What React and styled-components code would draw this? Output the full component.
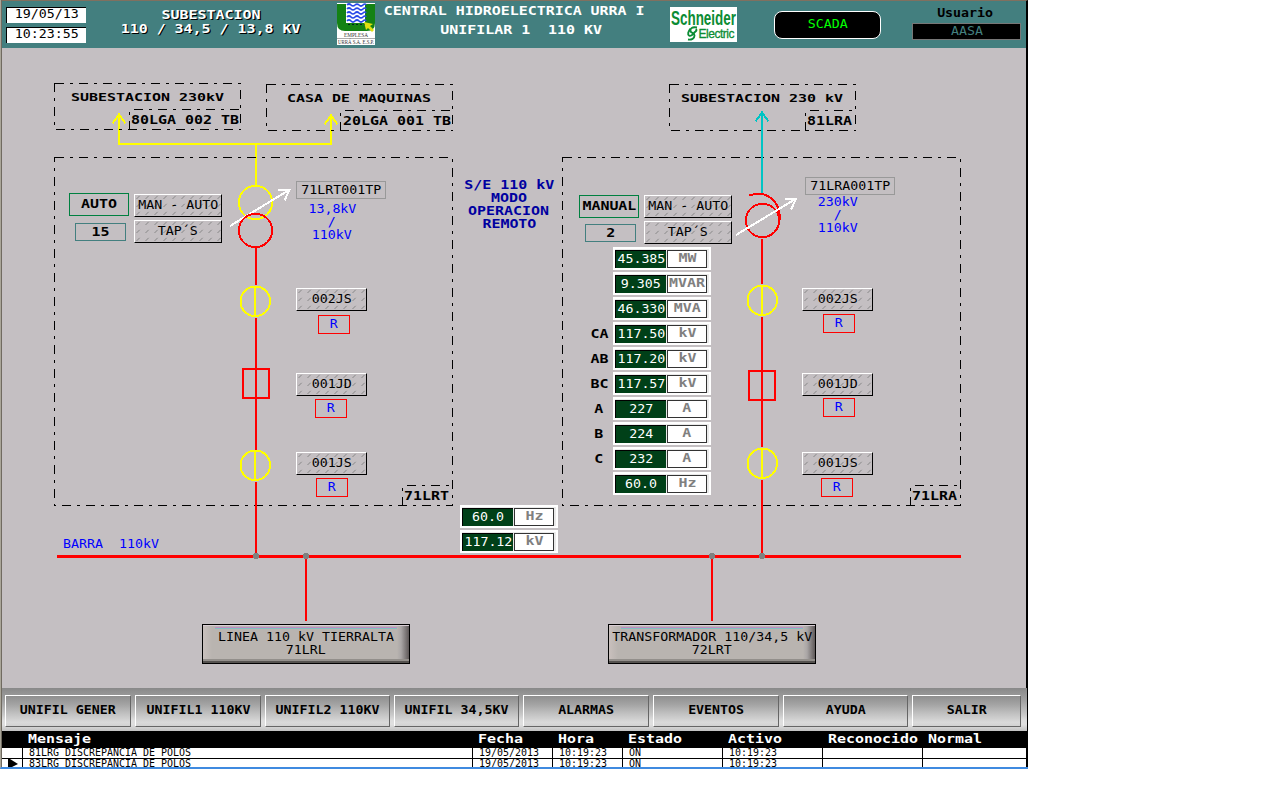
import React from "react";
import styled, { createGlobalStyle, css } from "styled-components";

const Global = createGlobalStyle`
  body { margin: 0; background: #fff; }
  * { box-sizing: border-box; }
`;

/* ---------- typography ---------- */

/* Terminal-style text: $size is the font size, $adv the width of one character cell. */
const Text = styled.span`
  display: block;
  flex: none;
  font-family: "DejaVu Sans Mono", "Liberation Mono", monospace;
  font-size: ${(p) => p.$size || 12.4}px;
  font-weight: ${(p) => (p.$bold ? 700 : 400)};
  color: ${(p) => p.$color || "#000"};
  line-height: ${(p) => p.$line || 13}px;
  white-space: pre;
  margin-right: ${(p) => p.$pull || 0}px;
  transform: scaleX(${(p) => (p.$adv || 8) / ((p.$size || 12.4) * 0.602)});
  transform-origin: ${(p) => p.$origin || "center"};
  text-shadow: ${(p) => (p.$shadow ? "1px 1px 0 #000" : "none")};
`;

/* ---------- frame ---------- */

const Frame = styled.main`
  width: 1028px;
  height: 769px;
  display: flex;
  flex-direction: column;
  border-left: 1px solid #aaa699;
  border-bottom: 2px solid #3f8ae0;
  background: #c4bfc2;
`;

const Inner = styled.div`
  flex: 1;
  min-height: 0;
  display: flex;
  flex-direction: column;
  border-left: 1px solid #706a60;
`;

const Header = styled.header`
  height: 48px;
  flex: none;
  display: grid;
  grid-template-columns: 80px 250px 40px 293px 69px 36px 107px 30px 111px;
  padding-left: 4px;
  background: #437f7f;
  border-top: 1px solid #80705f;
  border-right: 2px solid #000;
`;

const Clocks = styled.div`
  display: flex;
  flex-direction: column;
  gap: 4px;
  padding-top: 6px;
`;

const Clock = styled.div`
  height: 16px;
  display: flex;
  justify-content: center;
  background: #fff;
  border-top: 1px solid #000;
  border-left: 1px solid #000;
`;

const Title = styled.div`
  display: flex;
  flex-direction: column;
  align-items: center;
  gap: ${(p) => p.$gap}px;
  padding-top: ${(p) => p.$top}px;
`;

const LogoCell = styled.div`
  padding: ${(p) => p.$top}px 0 0 1px;
  svg { display: block; overflow: visible; }
`;

const Mode = styled.div`
  height: 28px;
  margin-top: 10px;
  display: flex;
  justify-content: center;
  padding-top: 5px;
  background: #000;
  border: 1px solid #fff;
  border-radius: 8px;
`;

const User = styled.div`
  display: flex;
  flex-direction: column;
  align-items: center;
  padding-top: 5px;
  gap: 4px;
`;

const UserName = styled.div`
  width: 109px;
  height: 17px;
  display: flex;
  justify-content: center;
  background: #000;
  border: 1px solid #777;
`;

/* ---------- diagram ---------- */

const Canvas = styled.section`
  position: relative;
  height: 640px;
  flex: none;
  border-right: 2px solid #000;
`;

/* Origin of the diagram is the window corner, so nodes use window coordinates. */
const Plane = styled.div`
  position: absolute;
  left: -2px;
  top: -48px;
  width: 1026px;
  height: 688px;
`;

const Wires = styled.svg`
  position: absolute;
  inset: 0;
  shape-rendering: crispEdges;
`;

const Node = styled.div`
  position: absolute;
  left: ${(p) => p.$x}px;
  top: ${(p) => p.$y}px;
  width: ${(p) => (p.$w ? p.$w + "px" : "auto")};
  height: ${(p) => (p.$h ? p.$h + "px" : "auto")};
  display: flex;
  flex-direction: column;
  align-items: ${(p) => p.$align || "center"};
`;

const Tag = styled(Node)`
  justify-content: center;
  border: 1px solid ${(p) => p.$edge};
  padding-bottom: 2px;
`;

const Hatched = styled(Node)`
  justify-content: center;
  padding-bottom: 2px;
  border: 1px solid;
  border-color: #fff #000 #000 #fff;
  svg { position: absolute; left: 0; top: 0; }
  span { position: relative; }
`;

const Plate = styled(Node)`
  padding-top: 5px;
  background: linear-gradient(90deg, #c9c0bd, #b9b4b0 9px, #b9b4b0 calc(100% - 12px), #aaa6a6 calc(100% - 8px), #5e5858);
  border: 1px solid #000;
  box-shadow: inset 0 1px #d8cdd4, inset 0 -2px #55524f, inset 0 -4px #938f8b;
  &::before {
    content: "";
    position: absolute;
    left: 12px;
    right: 12px;
    top: 2px;
    height: 2px;
    background: linear-gradient(#c08bc4 50%, #7fc0c0 50%);
  }
`;

const MeterStack = styled(Node)`
  gap: 2px;
`;

const MeterRow = styled.div`
  display: flex;
  align-items: center;
`;

const Phase = styled.div`
  width: 28px;
  display: flex;
  justify-content: center;
  padding-bottom: 1px;
`;

const Meter = styled.div`
  width: 98px;
  height: 23px;
  display: flex;
  gap: 1px;
  padding: 1px 1px 1px 2px;
  background: #fff radial-gradient(circle, #bbb 0.5px, transparent 0.8px) 0 0 / 2px 2px;
  box-shadow: inset 0 0 0 2px #fff;
`;

const Value = styled.div`
  width: 51px;
  height: 18px;
  margin-top: 2px;
  display: flex;
  justify-content: center;
  padding-top: 1px;
  background: #004018;
  border-top: 1px solid #000;
  border-left: 1px solid #000;
`;

const Unit = styled.div`
  width: 40px;
  height: 18px;
  margin-top: 2px;
  display: flex;
  justify-content: center;
  background: #fff;
  border: 1px solid #333;
`;

/* ---------- footer ---------- */

const Nav = styled.nav`
  height: 43px;
  flex: none;
  display: grid;
  grid-template-columns: 130px 130px 129px 129px 130px 130px 129px 113px;
  padding: 7px 0 4px 3px;
  background: linear-gradient(#898989, #a2a2a2 30%, #c9c9c9 62%, #dedede 75%, #e0e0e0 85%, #c2c2c2);
  border-right: 1px solid #000;
`;

const NavButton = styled.button`
  display: flex;
  align-items: center;
  justify-content: center;
  height: 32px;
  margin: 0 4px 0 0;
  padding: 0 0 4px;
  background: linear-gradient(#8e8e8e, #a5a5a5 30%, #c2c2c2 60%, #dadada 88%, #d2d2d2);
  border: 1px solid;
  border-color: #fff #666 #666 #fff;
  border-radius: 0;
`;

const Alarms = styled.div`
  flex: 1;
  min-height: 0;
  overflow: hidden;
  border-right: 2px solid #000;
`;

const columns = css`
  display: grid;
  grid-template-columns: 21px 450px 80px 70px 100px 100px 100px 1fr;
`;

const AlarmHead = styled.div`
  ${columns}
  height: 17px;
  padding-top: 1px;
  background: #000;
`;

const HeadCell = styled.div`
  padding-left: 5px;
`;

const AlarmRow = styled.div`
  ${columns}
  height: 11px;
  background: #fff;
  border-bottom: 1px solid #000;
`;

const AlarmCell = styled.div`
  height: 10px;
  padding-left: 5.5px;
  border-right: 1px solid #000;
  svg { display: block; }
  &:last-child { border-right: 0; }
`;

/* ---------- drawings ---------- */

function UrraLogo() {
  return (
    <svg width="38" height="42" viewBox="0 0 38 42">
      <rect width="38" height="42" fill="#fff" />
      <path d="M0 1h9v19h19V1h10v19q0 8-8 8H8q-8 0-8-8z" fill="#148214" />
      {[2, 6, 10, 14, 18].map((y) => (
        <path key={y} d={`M10 ${y}q2-2 4 0t4 0t4 0t4 0t3 0`} fill="none" stroke="#2848e8" strokeWidth="1.7" />
      ))}
      <path d="M11 21.500h18" stroke="#022" strokeDasharray="2 2" />
      <path d="M27 19l9 2-3 2 4 4-2 2-4-4-2 2z" fill="#e0e010" />
      <text x="7" y="33.500" fontFamily="Liberation Serif, serif" fontSize="5.600" textLength="24" lengthAdjust="spacingAndGlyphs" fill="#333">EMPLESA</text>
      <path d="M0 35.500h38" stroke="#888" strokeWidth=".7" />
      <text x="1" y="40.700" fontFamily="Liberation Serif, serif" fontSize="5.400" textLength="36" lengthAdjust="spacingAndGlyphs" fill="#333">URRÁ S.A. E.S.P.</text>
    </svg>
  );
}

function SchneiderLogo() {
  return (
    <svg width="67" height="35" viewBox="0 0 67 35">
      <rect width="67" height="35" fill="#fff" />
      <g fill="#0c8c34" fontFamily="Liberation Sans, sans-serif">
        <text x="1" y="17.500" fontSize="20" fontWeight="700" textLength="65" lengthAdjust="spacingAndGlyphs">Schneider</text>
        <text x="28.500" y="31" fontSize="12" textLength="36" lengthAdjust="spacing" stroke="#0c8c34" strokeWidth=".3">Electric</text>
      </g>
      <path d="M27 20.500c-5-1-7 1-6.500 3.500s4 1.500 4 4.500-3 4.500-6.500 4M20.500 21.500c-2.500 3-3 6-1.500 7s3.500-.5 5-2.500 3.500-2 2-4" fill="none" stroke="#0c8c34" strokeWidth="1.900" />
    </svg>
  );
}

function Hatch({ w, h }) {
  return (
    <svg width={w - 2} height={h - 2}>
      <defs>
        <pattern id="hatch" width="9" height="8" patternUnits="userSpaceOnUse">
          <path d="M1.500 4l3.200-3.200" stroke="#808080" strokeWidth="0.900" />
        </pattern>
      </defs>
      <rect width={w - 2} height={h - 2} fill="url(#hatch)" />
    </svg>
  );
}

function Disconnector({ x, y }) {
  return (
    <g fill="none" stroke="#ff0" strokeWidth="2">
      <circle cx={x} cy={y} r="14.800" />
      <path d={`M${x} ${y - 15}v30`} />
    </g>
  );
}

const DASH = "9 6 3 6";

function Diagram() {
  return (
    <Wires width="1026" height="688">
      <g fill="none" stroke="#ff0" strokeWidth="2">
        <path d="M119 115V144H331V115" />
        <path d="M112.500 123.500L119 114.500L125.500 123.500M324.500 124.500L331 115.500L337.500 124.500" />
        <path d="M256 145V185" />
        <circle cx="255.500" cy="202.500" r="16.700" />
      </g>
      <g fill="none" stroke="#000" strokeDasharray={DASH}>
        <rect x="54.500" y="83.500" width="186" height="46" />
        <path d="M129.500 129.500V109.500H240.500" />
        <rect x="266.500" y="84.500" width="186" height="46" />
        <path d="M340.500 130.500V110.500H452.500" />
        <rect x="669.500" y="84.500" width="186" height="46" />
        <path d="M805.500 130.500V110.500H855.500" />
        <rect x="54.500" y="157.500" width="398" height="348" />
        <path d="M402.500 505.500V485.500H452.500" />
        <rect x="562.500" y="157.500" width="398" height="348" />
        <path d="M910.500 505.500V485.500H960.500" />
      </g>
      <g fill="none" stroke="#00c4c4" strokeWidth="2">
        <path d="M762 113V193" />
        <path d="M755.500 121.500L762 112.500L768.500 121.500" />
      </g>
      <path d="M230 226L289 190M278 190H289.500L284.500 200.500" fill="none" stroke="#fff" strokeWidth="2" />
      <g fill="none" stroke="#f00" strokeWidth="2">
        <circle cx="255.500" cy="230.500" r="16.700" />
        <path d="M256 248V285M256 318V450M256 482V555" />
        <rect x="243" y="369" width="26" height="29" />
        <circle cx="762.500" cy="220.500" r="16.700" />
        <path d="M749 195Q758 193.500 764 194.500Q780 200 780 220" />
        <path d="M762 239V284M762 317V447M762 480V555" />
        <rect x="749" y="371" width="26" height="29" />
        <path d="M306 558V621M712 558V621" />
        <path d="M57 556.500H961" strokeWidth="3" />
      </g>
      <path d="M736 235L795.500 199M785 199H796L791 209.500" fill="none" stroke="#fff" strokeWidth="2" />
      <Disconnector x={255.3} y={301.3} />
      <Disconnector x={255.3} y={465.3} />
      <Disconnector x={762.3} y={300.3} />
      <Disconnector x={762.3} y={463.3} />
      <g fill="#808080">
        {[256, 306, 712, 762].map((x) => (
          <circle key={x} cx={x} cy="556" r="2.900" />
        ))}
      </g>
    </Wires>
  );
}

/* ---------- parts ---------- */

function Caption({ x, y, children, ...type }) {
  return (
    <Node $x={x} $y={y} $align="flex-start">
      <Text $origin="left" {...type}>{children}</Text>
    </Node>
  );
}

function PushButton({ x, y, w, children }) {
  return (
    <Hatched $x={x} $y={y} $w={w} $h={23}>
      <Hatch w={w} h={23} />
      <Text>{children}</Text>
    </Hatched>
  );
}

function Position({ x, y }) {
  return (
    <Tag $x={x} $y={y} $w={32} $h={19} $edge="#f00">
      <Text $color="#00f">R</Text>
    </Tag>
  );
}

function Reading({ phase, value, unit }) {
  return (
    <MeterRow>
      {phase !== undefined && (
        <Phase><Text $bold $adv={9}>{phase}</Text></Phase>
      )}
      <Meter>
        <Value><Text $color="#fff">{value}</Text></Value>
        <Unit><Text $bold $adv={9} $color="#808080">{unit}</Text></Unit>
      </Meter>
    </MeterRow>
  );
}

const readings = [
  ["", "45.385", "MW"],
  ["", "9.305", "MVAR"],
  ["", "46.330", "MVA"],
  ["CA", "117.50", "kV"],
  ["AB", "117.20", "kV"],
  ["BC", "117.57", "kV"],
  ["A", "227", "A"],
  ["B", "224", "A"],
  ["C", "232", "A"],
  ["", "60.0", "Hz"],
];

const navItems = ["UNIFIL GENER", "UNIFIL1 110KV", "UNIFIL2 110KV", "UNIFIL 34,5KV", "ALARMAS", "EVENTOS", "AYUDA", "SALIR"];
const heads = ["", "Mensaje", "Fecha", "Hora", "Estado", "Activo", "Reconocido", "Normal"];
const alarms = [
  ["81LRG DISCREPANCIA DE POLOS", "19/05/2013", "10:19:23", "ON", "10:19:23", "", ""],
  ["83LRG DISCREPANCIA DE POLOS", "19/05/2013", "10:19:23", "ON", "10:19:23", "", ""],
];

export default function App() {
  const place = { $bold: true, $adv: 9, $size: 9.8 };
  const code = { $bold: true, $adv: 9 };
  const blue = { $color: "#00f" };
  return (
    <Frame>
      <Global />
      <Inner>
        <Header>
          <Clocks>
            <Clock><Text $line={12}>19/05/13</Text></Clock>
            <Clock><Text $line={12}>10:23:55</Text></Clock>
          </Clocks>
          <Title $top={7} $gap={1}>
            <Text $bold $adv={9} $color="#fff" $shadow>SUBESTACION</Text>
            <Text $bold $adv={9} $color="#fff" $shadow>110 / 34,5 / 13,8 KV</Text>
          </Title>
          <LogoCell $top={2}><UrraLogo /></LogoCell>
          <Title $top={3} $gap={6}>
            <Text $bold $adv={9} $color="#fff" $pull={16}>CENTRAL HIDROELECTRICA URRA I</Text>
            <Text $bold $adv={9} $color="#fff" $pull={2}>UNIFILAR 1  110 KV</Text>
          </Title>
          <LogoCell $top={6}><SchneiderLogo /></LogoCell>
          <i />
          <Mode><Text $color="#0f0">SCADA</Text></Mode>
          <i />
          <User>
            <Text $bold $pull={2}>Usuario</Text>
            <UserName><Text $color="#437f7f">AASA</Text></UserName>
          </User>
        </Header>

        <Canvas>
          <Plane>
            <Diagram />

            <Caption x={71} y={91} {...place}>SUBESTACION 230kV</Caption>
            <Caption x={131} y={113} {...code}>80LGA 002 TB</Caption>
            <Caption x={287} y={92} {...place}>CASA DE MAQUINAS</Caption>
            <Caption x={343} y={114} {...code}>20LGA 001 TB</Caption>
            <Caption x={681} y={92} {...place}>SUBESTACION 230 kV</Caption>
            <Caption x={807} y={114} {...code}>81LRA</Caption>
            <Caption x={404} y={489} {...code}>71LRT</Caption>
            <Caption x={912} y={489} {...code}>71LRA</Caption>

            <Tag $x={69} $y={193} $w={60} $h={23} $edge="#008040"><Text {...code}>AUTO</Text></Tag>
            <Tag $x={75} $y={223} $w={51} $h={18} $edge="#437f7f"><Text {...code}>15</Text></Tag>
            <PushButton x={134} y={194} w={88}>MAN - AUTO</PushButton>
            <PushButton x={134} y={220} w={88}>TAP´S</PushButton>
            <Tag $x={579} $y={195} $w={60} $h={23} $edge="#008040"><Text {...code}>MANUAL</Text></Tag>
            <Tag $x={585} $y={224} $w={51} $h={18} $edge="#437f7f"><Text {...code}>2</Text></Tag>
            <PushButton x={644} y={195} w={88}>MAN - AUTO</PushButton>
            <PushButton x={644} y={221} w={88}>TAP´S</PushButton>

            <Tag $x={296} $y={181} $w={90} $h={18} $edge="#999"><Text>71LRT001TP</Text></Tag>
            <Node $x={292} $y={202} $w={80}>
              <Text {...blue}>13,8kV</Text>
              <Text {...blue}>/</Text>
              <Text {...blue}>110kV</Text>
            </Node>
            <Tag $x={805} $y={177} $w={90} $h={18} $edge="#999"><Text>71LRA001TP</Text></Tag>
            <Node $x={798} $y={195} $w={80}>
              <Text {...blue}>230kV</Text>
              <Text {...blue}>/</Text>
              <Text {...blue}>110kV</Text>
            </Node>

            <PushButton x={296} y={288} w={71}>002JS</PushButton>
            <PushButton x={296} y={373} w={71}>001JD</PushButton>
            <PushButton x={296} y={452} w={71}>001JS</PushButton>
            <PushButton x={802} y={288} w={71}>002JS</PushButton>
            <PushButton x={802} y={373} w={71}>001JD</PushButton>
            <PushButton x={802} y={452} w={71}>001JS</PushButton>
            <Position x={318} y={315} />
            <Position x={315} y={399} />
            <Position x={316} y={478} />
            <Position x={823} y={314} />
            <Position x={823} y={398} />
            <Position x={821} y={478} />

            <Node $x={460} $y={178} $w={98}>
              {["S/E 110 kV", "MODO", "OPERACION", "REMOTO"].map((t) => (
                <Text key={t} $bold $adv={9} $color="#0000a0">{t}</Text>
              ))}
            </Node>

            <MeterStack $x={585} $y={247}>
              {readings.map(([phase, value, unit], i) => (
                <Reading key={i} phase={phase} value={value} unit={unit} />
              ))}
            </MeterStack>
            <MeterStack $x={460} $y={505}>
              <Reading value="60.0" unit="Hz" />
              <Reading value="117.12" unit="kV" />
            </MeterStack>

            <Caption x={63} y={537} {...blue}>BARRA  110kV</Caption>

            <Plate $x={202} $y={624} $w={208} $h={40}>
              <Text>LINEA 110 kV TIERRALTA</Text>
              <Text>71LRL</Text>
            </Plate>
            <Plate $x={608} $y={624} $w={208} $h={40}>
              <Text>TRANSFORMADOR 110/34,5 kV</Text>
              <Text>72LRT</Text>
            </Plate>
          </Plane>
        </Canvas>

        <Nav>
          {navItems.map((t) => (
            <NavButton key={t}><Text $bold>{t}</Text></NavButton>
          ))}
        </Nav>

        <Alarms>
          <AlarmHead>
            {heads.map((t, i) => (
              <HeadCell key={i}><Text $bold $adv={9} $color="#fff" $origin="left">{t}</Text></HeadCell>
            ))}
          </AlarmHead>
          {alarms.map((cells, i) => (
            <AlarmRow key={i}>
              <AlarmCell>
                {i === 1 && (
                  <svg width="10" height="9" viewBox="0 0 10 9"><path d="M0 0h2l8 5-8 4H0z" /></svg>
                )}
              </AlarmCell>
              {cells.map((t, j) => (
                <AlarmCell key={j}><Text $size={9.6} $adv={6} $line={10} $origin="left">{t}</Text></AlarmCell>
              ))}
            </AlarmRow>
          ))}
        </Alarms>
      </Inner>
    </Frame>
  );
}
